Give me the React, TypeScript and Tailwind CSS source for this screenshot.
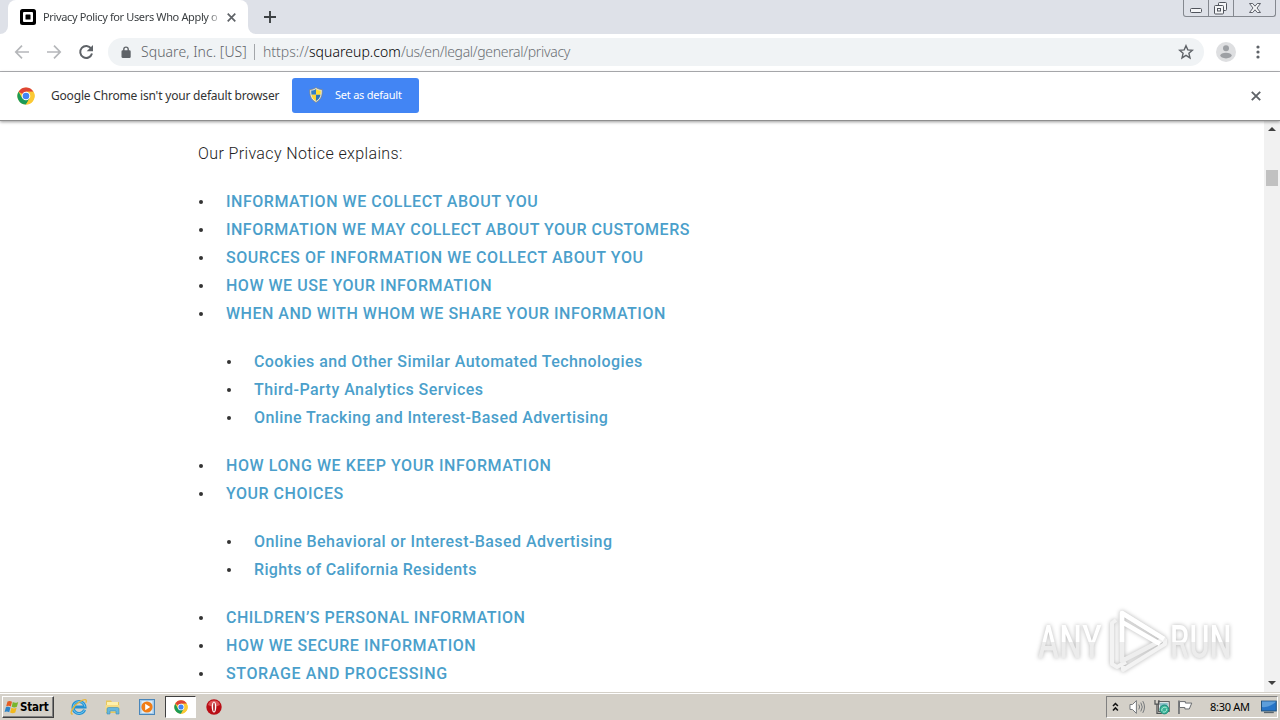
import type { ReactNode } from "react";

function Chrome({ className }: { className: string }) {
  return (
    <svg viewBox="0 0 18 18" className={className}>
      <circle cx="9" cy="9" r="8.6" fill="#fbc934" />
      <path d="M9 9 1.55 4.7A8.6 8.6 0 0 1 16.45 4.7H9Z" fill="#de4436" />
      <path d="M1.55 4.7A8.6 8.6 0 0 0 9 17.6l3.7-6.4L9 9 5.3 11.2Z" fill="#1b9b57" />
      <path d="M9 4.7h7.45A8.6 8.6 0 0 1 9 17.6l3.9-6.5Z" fill="#fbc934" />
      <circle cx="9" cy="9" r="4.3" fill="#fff" />
      <circle cx="9" cy="9" r="3.3" fill="#4285f4" />
    </svg>
  );
}

function Cross({ className }: { className: string }) {
  return (
    <svg viewBox="0 0 10 10" className={className} fill="none" stroke="#5f6368" strokeWidth="1.9">
      <path d="m.8.8 8.4 8.4M9.2.8.8 9.2" />
    </svg>
  );
}

function TabStrip() {
  return (
    <div className="flex h-[34px] items-start bg-[#dee1e8]">
      <div className="h-[34px] w-2 bg-white">
        <div className="h-full w-full rounded-br-lg bg-[#dee1e8]" />
      </div>
      <div className="flex h-[34px] w-[240px] shrink-0 items-center rounded-t-lg bg-white pl-3">
        <svg viewBox="0 0 16 16" className="size-4 shrink-0">
          <rect width="16" height="16" rx="2.5" fill="#000" />
          <rect x="3" y="3" width="10" height="10" rx="1" fill="#fff" />
          <rect x="5.5" y="5.5" width="5" height="5" rx=".6" fill="#000" />
        </svg>
        <div className="ml-[7px] flex w-[177px] whitespace-nowrap text-[11px] leading-4 tracking-[-0.36px] text-[#3c4043] [mask-image:linear-gradient(to_right,black_164px,transparent_180px)]">
          Privacy Policy for Users Who Apply o
        </div>
        <Cross className="ml-[7px] size-[9px]" />
      </div>
      <div className="h-[34px] w-2 bg-white">
        <div className="h-full w-full rounded-bl-lg bg-[#dee1e8]" />
      </div>
      <svg viewBox="0 0 12 12" className="ml-2 mt-[11px] size-3" stroke="#3c4043" strokeWidth="1.9">
        <path d="M6 0v12M0 6h12" />
      </svg>
      <div className="ml-auto mr-1 flex h-[17px] w-[93px] overflow-hidden rounded-b-[3px] border border-t-0 border-[#84888f]">
        <div className="w-[25px] border-r border-[#84888f]">
          <svg viewBox="0 0 25 16" className="h-4 w-[25px]" fill="#f4f5f7" stroke="#50545c">
            <rect x="6.5" y="8.5" width="11" height="4" rx="1" />
          </svg>
        </div>
        <div className="w-[25px] border-r border-[#84888f]">
          <svg viewBox="0 0 25 16" className="h-4 w-[25px]" fill="#f4f5f7" stroke="#50545c">
            <rect x="9.5" y="2.5" width="8" height="8" rx="1" />
            <rect x="5.500" y="5.5" width="9" height="8.500" rx="1" />
            <rect x="8.500" y="8.5" width="3" height="2.500" />
          </svg>
        </div>
        <svg viewBox="0 0 41 16" className="h-4 w-[41px]" fill="#f4f5f7" stroke="#50545c" strokeWidth=".9">
          <path d="M15.5 3.5h3.2l2.3 2.700 2.3-2.700h3.200L23 8l3.5 4.5h-3.2L21 9.8l-2.3 2.7h-3.2L19 8Z" />
        </svg>
      </div>
    </div>
  );
}

function Toolbar() {
  return (
    <div className="flex h-[38px] items-center border-b border-[#b1b2b6] bg-white pb-px pl-[14px]">
      <svg viewBox="0 0 16 16" className="size-4" fill="none" stroke="#b5b7ba" strokeWidth="1.7">
        <path d="M15 8H2M8 1.7 1.8 8 8 14.3" />
      </svg>
      <svg viewBox="0 0 16 16" className="ml-4 size-4" fill="none" stroke="#b5b7ba" strokeWidth="1.7">
        <path d="M1 8h13M8 1.7 14.2 8 8 14.3" />
      </svg>
      <svg viewBox="0 0 16 16" className="ml-4 size-4" fill="none" stroke="#5f6368" strokeWidth="2">
        <path d="M13.2 4.6A6 6 0 1 0 14 9.6" />
        <path d="M15 1v6.3H8.7Z" fill="#5f6368" stroke="none" />
      </svg>
      <div className="ml-[14px] flex h-7 w-[1096px] items-center rounded-full bg-[#f0f3f5] pl-[13px]">
        <svg viewBox="0 0 10 12" className="h-3 w-[10px]" fill="none" stroke="#5f6368" strokeWidth="1.4">
          <rect x="1.2" y="5" width="7.8" height="6.2" rx=".5" fill="#5f6368" />
          <path d="M2.8 5V3.3a2.2 2.2 0 0 1 4.4 0V5" />
        </svg>
        <div className="ml-[10px] w-[106px] whitespace-nowrap text-[14px] font-light leading-5 tracking-[0.06px] text-[#5f6368]">Square, Inc. [US]</div>
        <div className="ml-[7px] h-4 w-px bg-[#a3a6aa]" />
        <div className="ml-2 whitespace-nowrap text-[14px] font-light leading-5 text-[#6b6f74]">
          <span>https://</span>
          <span className="tracking-[0.05px] text-black">squareup.com</span>
          <span className="tracking-[-0.32px]">/us/en/legal/general/privacy</span>
        </div>
        <svg viewBox="0 0 16 16" className="ml-auto mr-[10px] size-4" fill="none" stroke="#5f6368" strokeWidth="1.4">
          <path d="m8 1.7 1.8 4.2 4.6.4-3.5 3 1.1 4.6L8 11.4l-4 2.5 1.1-4.6-3.5-3 4.6-.4Z" />
        </svg>
      </div>
      <svg viewBox="0 0 20 20" className="ml-3 size-5">
        <circle cx="10" cy="10" r="10" fill="#dedfe1" />
        <circle cx="10" cy="6.2" r="3" fill="#9da0a4" />
        <ellipse cx="10" cy="13.6" rx="5.7" ry="2.8" fill="#9da0a4" />
      </svg>
      <svg viewBox="0 0 4 14" className="ml-5 h-[14px] w-1" fill="#5f6368">
        <circle cx="2" cy="2" r="1.6" />
        <circle cx="2" cy="7" r="1.6" />
        <circle cx="2" cy="12" r="1.6" />
      </svg>
    </div>
  );
}

function Shield() {
  return (
    <svg viewBox="0 0 14 16" className="h-4 w-[14px]">
      <path d="M7 .5C5 1.9 3 2.5.8 2.5c-.3 6 .9 10 6.2 12.9 5.3-2.9 6.5-6.9 6.2-12.9C11 2.5 9 1.900 7 .5Z" fill="#e4e6de" stroke="#7c8076" strokeWidth=".7" />
      <path d="M7 2C5.5 3 4 3.5 2.2 3.6c0 1.5 0 2.8.3 4.1H7Z" fill="#347fc4" />
      <path d="M7 2c1.500 1 3 1.500 4.800 1.600 0 1.500 0 2.800-.3 4.100H7Z" fill="#ffdc32" />
      <path d="M2.500 7.700C3 10.500 4.500 12.600 7 14V7.700Z" fill="#ffd631" />
      <path d="M11.500 7.700C11 10.500 9.500 12.600 7 14V7.700Z" fill="#2c76b9" />
    </svg>
  );
}

function InfoBar() {
  return (
    <div className="relative flex h-[49px] items-center border-b border-[#8e8e8e] bg-white pb-px pl-[17px] pr-[19px] shadow-[0_1px_3px_#0006]">
      <Chrome className="size-[18px]" />
      <div className="ml-4 w-[241px] whitespace-nowrap text-[12px] leading-5 tracking-[-0.19px] text-[#333]">
        Google Chrome isn't your default browser
      </div>
      <div className="mb-px flex h-[35px] w-[127px] items-center rounded-[3px] bg-[#4285f4] pl-[17px]">
        <Shield />
        <div className="ml-3 whitespace-nowrap text-[11px] leading-4 tracking-[-0.23px] text-white">Set as default</div>
      </div>
      <Cross className="ml-auto size-[10px]" />
    </div>
  );
}

function Item({ children, track }: { children: ReactNode; track: string }) {
  return (
    <li className="flex h-7 items-center">
      <span className="ml-px mr-[23px] size-1 rounded-full bg-[#333]" />
      <a className={`whitespace-nowrap font-medium text-[#4b9fcb] ${track}`}>{children}</a>
    </li>
  );
}

function Content() {
  return (
    <main className="min-w-0 flex-1 overflow-hidden bg-white pl-[198px] pt-[19px] font-['Roboto',sans-serif] text-[16px] leading-7">
      <p className="mb-5 font-light tracking-[0.38px] text-[#222]">Our Privacy Notice explains:</p>
      <ul>
        <Item track="tracking-[0.53px]">INFORMATION WE COLLECT ABOUT YOU</Item>
        <Item track="tracking-[0.49px]">INFORMATION WE MAY COLLECT ABOUT YOUR CUSTOMERS</Item>
        <Item track="tracking-[0.56px]">SOURCES OF INFORMATION WE COLLECT ABOUT YOU</Item>
        <Item track="tracking-[0.52px]">HOW WE USE YOUR INFORMATION</Item>
        <Item track="tracking-[0.51px]">WHEN AND WITH WHOM WE SHARE YOUR INFORMATION</Item>
      </ul>
      <ul className="my-5 pl-7">
        <Item track="tracking-[0.42px]">Cookies and Other Similar Automated Technologies</Item>
        <Item track="tracking-[0.46px]">Third-Party Analytics Services</Item>
        <Item track="tracking-[0.39px]">Online Tracking and Interest-Based Advertising</Item>
      </ul>
      <ul>
        <Item track="tracking-[0.57px]">HOW LONG WE KEEP YOUR INFORMATION</Item>
        <Item track="tracking-[0.5px]">YOUR CHOICES</Item>
      </ul>
      <ul className="my-5 pl-7">
        <Item track="tracking-[0.43px]">Online Behavioral or Interest-Based Advertising</Item>
        <Item track="tracking-[0.34px]">Rights of California Residents</Item>
      </ul>
      <ul>
        <Item track="tracking-[0.5px]">CHILDREN’S PERSONAL INFORMATION</Item>
        <Item track="tracking-[0.55px]">HOW WE SECURE INFORMATION</Item>
        <Item track="tracking-[0.62px]">STORAGE AND PROCESSING</Item>
      </ul>
    </main>
  );
}

function ScrollBar() {
  return (
    <div className="flex w-4 flex-col items-center bg-[#f1f1f1] pb-[7px] pt-[6px]">
      <svg viewBox="0 0 8 4" className="h-1 w-2" fill="#404040"><path d="M4 0 8 4H0Z" /></svg>
      <div className="mt-[39px] h-4 w-3 bg-[#c1c1c1]" />
      <svg viewBox="0 0 8 4" className="mt-auto h-1 w-2" fill="#404040"><path d="M4 4 8 0H0Z" /></svg>
    </div>
  );
}

function Watermark() {
  return (
    <div className="absolute left-[1038px] top-[608px] flex h-[66px] w-[196px] items-center justify-between text-white [filter:drop-shadow(0_0_2px_#b5b5b5)]">
      <span className="w-[68px]">
        <span className="inline-block origin-left scale-x-[0.67] bg-linear-to-b from-white from-50% to-[#ececec] to-50% bg-clip-text font-['Roboto',sans-serif] text-[47px] font-medium leading-none tracking-[1px] text-transparent">ANY</span>
      </span>
      <svg viewBox="0 0 58 66" className="h-[66px] w-[58px] shrink-0" fill="none" strokeLinejoin="round">
        <path d="M7 12 3 15v41l5 3 9-5M14 58v4l42-26v-5" stroke="#f3f3f3" strokeWidth="4" />
        <path d="M13 53V5l42 26Z" stroke="#eee" strokeWidth="4.500" />
        <path d="M13 34V5l42 26M13 14l38 22" stroke="#fff" strokeWidth="4.500" />
      </svg>
      <span className="w-[64px]">
        <span className="inline-block origin-left scale-x-[0.65] bg-linear-to-b from-white from-50% to-[#ececec] to-50% bg-clip-text font-['Roboto',sans-serif] text-[47px] font-medium leading-none tracking-[0.5px] text-transparent">RUN</span>
      </span>
    </div>
  );
}

function TaskBar() {
  return (
    <div className="flex h-7 items-center border-t border-[#d4d0c8] bg-[#d4d0c8] pl-[2px] pr-[2px] pt-px shadow-[inset_0_1px_0_#fff]">
      <div className="flex h-[22px] w-[52px] items-center border border-b-[#404040] border-l-white border-r-[#404040] border-t-white pl-px shadow-[inset_-1px_-1px_0_#808080]">
        <svg viewBox="0 0 16 16" className="size-4 shrink-0">
          <path d="M3.5 2.5c1.5-.9 3-.7 4.5.2L6.8 7.4c-1.5-.8-3-.9-4.6-.1Z" fill="#e65d22" />
          <path d="M8.8 3.1c1.7.9 3.400.9 5.400-.2l-1.300 4.900c-1.700.9-3.500.9-5.200 0Z" fill="#78b62d" />
          <path d="M1.900 8.200c1.500-.7 3.100-.6 4.600.2l-1.300 4.800c-1.500-.9-3-1-4.600-.2Z" fill="#2d84c8" />
          <path d="M7.400 8.800c1.700.8 3.500.8 5.200 0l-1.300 4.800c-1.700.9-3.500.9-5.200 0Z" fill="#f2b91e" />
        </svg>
        <span className="font-['DejaVu_Sans_Condensed','DejaVu_Sans',sans-serif] text-[11.5px] font-bold leading-4 tracking-[-0.2px] text-black">Start</span>
      </div>
      <svg viewBox="0 0 18 18" className="ml-4 size-[18px]" fill="none">
        <path d="M14.6 11.8A6 6 0 1 1 15 8.900H4" stroke="#2491d3" strokeWidth="3" />
        <path d="M14.6 11.8A6 6 0 1 1 15 8.900" stroke="#70c8ef" strokeWidth="1" />
        <path d="M2.800 15.900C-1.500 17 3 7.500 10 3.500c5-3 7.500-2.200 5.800 1.200" stroke="#e8b73c" strokeWidth="1.300" />
      </svg>
      <svg viewBox="0 0 18 18" className="ml-4 size-[18px]">
        <path d="M2 2.500h5l1 1.500h7v11H2Z" fill="#e7c75c" />
        <path d="M3 4h11v8H3Z" fill="#fff1ab" />
        <path d="M1.500 7h14v7h-14Z" fill="#f6dc83" />
        <path d="M3 16v-5q0-1.500 1.500-1.500h9Q15 9.500 15 11v5h-3v-3H6v3Z" fill="#67b7dc" stroke="#3b8eba" strokeWidth=".6" />
      </svg>
      <svg viewBox="0 0 16 16" className="ml-[17px] size-4">
        <rect x=".5" y=".5" width="15" height="15" fill="#a5cae9" stroke="#4986ba" />
        <rect x="2.500" y="2" width="11" height="12" fill="#dcecf7" />
        <circle cx="8" cy="8" r="5.600" fill="#f17d16" />
        <path d="m6.200 4.800 5 3.200-5 3.200Z" fill="#fff" />
      </svg>
      <div className="ml-[10px] flex h-[22px] w-[31px] items-center justify-center border border-b-white border-l-[#404040] border-r-white border-t-[#404040] bg-white">
        <Chrome className="size-[14px]" />
      </div>
      <svg viewBox="0 0 16 16" className="ml-[10px] size-4">
        <circle cx="8" cy="8" r="7.700" fill="#b90e16" />
        <path d="M2 6a6.300 6.300 0 0 1 12 0Q8 9 2 6Z" fill="#dc5356" />
        <ellipse cx="8" cy="8" rx="2.300" ry="5.500" fill="#fff" />
        <ellipse cx="8" cy="8" rx=".8" ry="4.500" fill="#a50910" />
      </svg>
      <div className="ml-auto flex h-[22px] w-[172px] items-center border border-b-white border-l-[#808080] border-r-white border-t-[#808080] pl-[5px]">
        <svg viewBox="0 0 7 10" className="h-[10px] w-[7px]" fill="none" stroke="#111" strokeWidth="1.600">
          <path d="m1 4 2.500-2.500L6 4M1 8.500 3.500 6 6 8.500" />
        </svg>
        <svg viewBox="0 0 17 16" className="ml-[10px] h-4 w-[17px]" fill="none" stroke="#73777a">
          <path d="M1 5.500h2.500l4-4v13l-4-4H1Z" fill="#fff" />
          <path d="M10 5.500q1.600 2.500 0 5M12 3.500q3 4.500 0 9M14 2q3.500 6 0 12" />
        </svg>
        <svg viewBox="0 0 17 16" className="ml-2 h-4 w-[17px]" fill="none">
          <rect x="4.500" y="2.500" width="11" height="10" fill="#e6f0f0" stroke="#555" />
          <rect x="6" y="4" width="8" height="7" fill="#89bfc8" />
          <path d="M1 1v4h4V1M3 5v9.500h5" stroke="#4d5153" strokeWidth="1.200" />
          <circle cx="10.500" cy="10.500" r="4.500" fill="#3bb498" stroke="#198b78" />
          <path d="M8 12a3 3 0 0 1 5-3M13 10a3 3 0 0 1-4 3" stroke="#b3ecd9" />
        </svg>
        <svg viewBox="0 0 17 16" className="ml-[7px] h-4 w-[17px]" fill="#fff" stroke="#686b6e">
          <path d="M2 1.500V15" strokeWidth="1.600" />
          <path d="M2.500 2.500h6v1.500H15L12.500 10H8V8.500H2.500Z" />
        </svg>
        <span className="ml-4 w-[46px] whitespace-nowrap text-[11px] leading-4 tracking-[-0.3px] text-black">8:30 AM</span>
        <svg viewBox="0 0 16 14" className="ml-[6px] h-[14px] w-4">
          <rect x=".5" y="1" width="15" height="10" fill="#2674c7" stroke="#20527c" />
          <path d="M1 7Q8 8 15 2V1.500H1Z" fill="#5c9edb" />
          <path d="M3 12.500h10" stroke="#59656d" strokeWidth="1.500" />
        </svg>
      </div>
    </div>
  );
}

export default function App() {
  return (
    <div className="relative flex h-[720px] w-[1280px] flex-col overflow-hidden bg-white font-['Noto_Sans','DejaVu_Sans',sans-serif]">
      <TabStrip />
      <Toolbar />
      <InfoBar />
      <div className="flex min-h-0 flex-1">
        <Content />
        <ScrollBar />
      </div>
      <TaskBar />
      <Watermark />
    </div>
  );
}
